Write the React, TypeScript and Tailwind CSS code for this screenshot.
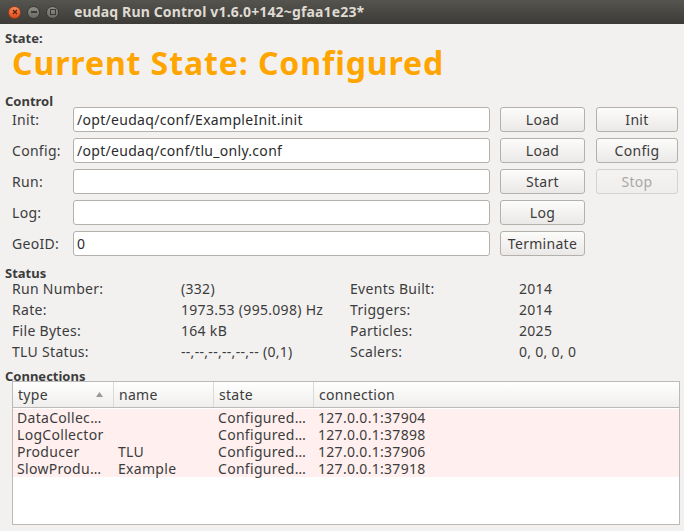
import React from "react";

const font = { fontFamily: '"Noto Sans", "DejaVu Sans", sans-serif' };

const rows = [
  { label: "Init:", value: "/opt/eudaq/conf/ExampleInit.init", b1: "Load", b2: "Init" },
  { label: "Config:", value: "/opt/eudaq/conf/tlu_only.conf", b1: "Load", b2: "Config" },
  { label: "Run:", value: "", b1: "Start", b2: "Stop", off: true },
  { label: "Log:", value: "", b1: "Log" },
  { label: "GeoID:", value: "0", b1: "Terminate" },
];

const status = [
  ["Run Number:", "(332)", "Events Built:", "2014"],
  ["Rate:", "1973.53 (995.098) Hz", "Triggers:", "2014"],
  ["File Bytes:", "164 kB", "Particles:", "2025"],
  ["TLU Status:", "--,--,--,--,--,-- (0,1)", "Scalers:", "0, 0, 0, 0"],
];

const conns = [
  ["DataCollec…", "", "Configured…", "127.0.0.1:37904"],
  ["LogCollector", "", "Configured…", "127.0.0.1:37898"],
  ["Producer", "TLU", "Configured…", "127.0.0.1:37906"],
  ["SlowProdu…", "Example", "Configured…", "127.0.0.1:37918"],
];

function Btn({ text, off }: { text: string; off?: boolean }) {
  return (
    <div
      className={`h-[25px] rounded-[3px] border flex items-center justify-center text-[14px] tracking-[0.3px] bg-gradient-to-b ${
        off
          ? "border-[#d4d2cf] from-[#f4f3f2] to-[#efeeec] text-[#a9a8a6]"
          : "border-[#b4b1ad] from-[#fcfcfb] to-[#ebe9e7] text-[#3c3c3c]"
      }`}
    >
      {text}
    </div>
  );
}

function TitleBar() {
  return (
    <div className="h-[24px] flex items-center bg-gradient-to-b from-[#55544f] to-[#3c3b37] pl-[8px]">
      <div className="w-[13px] h-[13px] rounded-full bg-gradient-to-b from-[#f78a5b] to-[#de4b16] border border-[#9a3c16] flex items-center justify-center">
        <svg width="6" height="6" viewBox="0 0 6 6">
          <path d="M1 1L5 5M5 1L1 5" stroke="#5a1f08" strokeWidth="1.3" />
        </svg>
      </div>
      <div className="ml-[6px] w-[13px] h-[13px] rounded-full bg-gradient-to-b from-[#8e8d88] to-[#6a6964] border border-[#3a3935] flex items-center justify-center">
        <div className="w-[6px] h-[1.5px] bg-[#3a3935]" />
      </div>
      <div className="ml-[6px] w-[13px] h-[13px] rounded-full bg-gradient-to-b from-[#8e8d88] to-[#6a6964] border border-[#3a3935] flex items-center justify-center">
        <div className="w-[6px] h-[6px] border-[1.5px] border-[#3a3935]" />
      </div>
      <div className="ml-[15px] text-[14px] font-bold text-[#dfdbd2] leading-none tracking-[0.15px]">
        eudaq Run Control v1.6.0+142~gfaa1e23*
      </div>
    </div>
  );
}

export default function App() {
  return (
    <div className="w-[684px] h-[531px] bg-[#f2f1f0] text-[#3c3c3c] overflow-hidden" style={font}>
      <TitleBar />
      <div className="pl-[5px] pt-[6px] text-[13px] font-bold leading-[16px]">State:</div>
      <div className="pl-[12px] mt-[1px] text-[32px] font-bold text-[#ffa500] leading-[32px] tracking-[0.9px]">
        Current State: Configured
      </div>

      <div className="pl-[5px] mt-[14px] text-[13px] font-bold leading-[16px]">Control</div>
      <div className="flex flex-col gap-[6px] mt-[-2px]">
        {rows.map((r) => (
          <div key={r.label} className="flex items-center h-[25px] text-[14px] tracking-[0.3px]">
            <div className="w-[73px] pl-[12px]">{r.label}</div>
            <div className="w-[417px] h-[25px] bg-white border border-[#b4b1ad] rounded-[3px] flex items-center px-[3px] text-[#2c2c2c]">
              {r.value}
            </div>
            <div className="ml-[10px] w-[85px]">
              <Btn text={r.b1} />
            </div>
            {r.b2 && (
              <div className="ml-[11px] w-[82px]">
                <Btn text={r.b2} off={r.off} />
              </div>
            )}
          </div>
        ))}
      </div>

      <div className="pl-[5px] mt-[10px] text-[13px] font-bold leading-[14px]">Status</div>
      <div className="flex flex-col mt-[-2px]">
        {status.map((s) => (
          <div key={s[0]} className="flex h-[21px] items-center text-[14px] tracking-[0.3px]">
            <div className="w-[181px] pl-[12px]">{s[0]}</div>
            <div className="w-[169px]">{s[1]}</div>
            <div className="w-[169px]">{s[2]}</div>
            <div>{s[3]}</div>
          </div>
        ))}
      </div>

      <div className="pl-[5px] mt-[8px] h-[12px] text-[13px] font-bold leading-[12px]">Connections</div>
      <div className="ml-[12px] mt-[-1px] w-[668px] h-[144px] bg-white border border-[#bcbab6] text-[14px] tracking-[0.3px] text-[#3c3c3c]">
        <div className="flex h-[26px] bg-gradient-to-b from-white to-[#efeeec] border-b border-[#bcbab6]">
          <div className="w-[101px] pl-[5px] flex items-center justify-between pr-[10px] border-r border-[#dcdad7]">
            <span>type</span>
            <svg width="7" height="5" viewBox="0 0 7 5">
              <path d="M0 5L3.5 0L7 5Z" fill="#9a9894" />
            </svg>
          </div>
          <div className="w-[100px] pl-[5px] flex items-center border-r border-[#dcdad7]">name</div>
          <div className="w-[100px] pl-[5px] flex items-center border-r border-[#dcdad7]">state</div>
          <div className="flex-1 pl-[5px] flex items-center">connection</div>
        </div>
        <div className="pt-px">
          {conns.map((c) => (
            <div key={c[0]} className="flex h-[17px] items-center bg-[#fff0ef] leading-none whitespace-nowrap">
              <div className="w-[101px] pl-[4px]">{c[0]}</div>
              <div className="w-[100px] pl-[4px]">{c[1]}</div>
              <div className="w-[100px] pl-[4px]">{c[2]}</div>
              <div className="flex-1 pl-[4px]">{c[3]}</div>
            </div>
          ))}
        </div>
      </div>
    </div>
  );
}
